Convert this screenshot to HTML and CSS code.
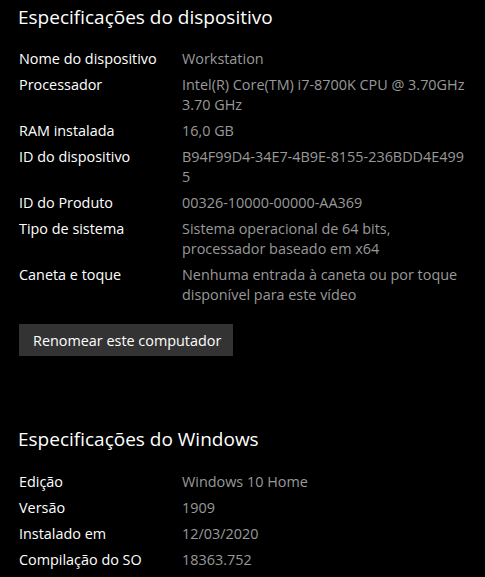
FILE: index.html
```html
<!DOCTYPE html>
<html lang="pt-BR">
<head>
<meta charset="utf-8">
<title>Sobre</title>
<link rel="stylesheet" href="styles.css">
</head>
<body>
<main class="page">
  <section class="section">
    <h2 class="title">Especificações do dispositivo</h2>
    <dl class="specs">
      <div class="row"><dt>Nome do dispositivo</dt><dd>Workstation</dd></div>
      <div class="row"><dt>Processador</dt><dd>Intel(R) Core(TM) i7-8700K CPU @ 3.70GHz<br>3.70 GHz</dd></div>
      <div class="row"><dt>RAM instalada</dt><dd>16,0 GB</dd></div>
      <div class="row"><dt>ID do dispositivo</dt><dd>B94F99D4-34E7-4B9E-8155-236BDD4E499<br>5</dd></div>
      <div class="row"><dt>ID do Produto</dt><dd>00326-10000-00000-AA369</dd></div>
      <div class="row"><dt>Tipo de sistema</dt><dd>Sistema operacional de 64 bits,<br>processador baseado em x64</dd></div>
      <div class="row"><dt>Caneta e toque</dt><dd>Nenhuma entrada à caneta ou por toque<br>disponível para este vídeo</dd></div>
    </dl>
    <button class="btn" type="button">Renomear este computador</button>
  </section>
  <section class="section second">
    <h2 class="title">Especificações do Windows</h2>
    <dl class="specs">
      <div class="row"><dt>Edição</dt><dd>Windows 10 Home</dd></div>
      <div class="row"><dt>Versão</dt><dd>1909</dd></div>
      <div class="row"><dt>Instalado em</dt><dd>12/03/2020</dd></div>
      <div class="row"><dt>Compilação do SO</dt><dd>18363.752</dd></div>
    </dl>
  </section>
</main>
</body>
</html>
```
FILE: styles.css
```css
html, body {
  margin: 0;
  padding: 0;
  background: #000;
}
body {
  font-family: "Open Sans", "Noto Sans", "Liberation Sans", sans-serif;
  color: #fff;
  -webkit-font-smoothing: antialiased;
}
.page {
  padding: 3px 0 0 19px;
}
.section {
  display: flex;
  flex-direction: column;
  align-items: flex-start;
}
.second {
  margin-top: 69px;
}
.title {
  margin: 0 0 0 -1px;
  font-size: 19px;
  line-height: 28px;
  font-weight: 400;
}
.specs {
  margin: 18px 0 0 0;
  display: flex;
  flex-direction: column;
  gap: 6px;
  font-size: 14.4px;
  line-height: 20px;
}
.second .specs {
  margin-top: 19px;
}
.row {
  display: grid;
  grid-template-columns: 163px auto;
}
.row dt {
  margin: 0;
  color: #fff;
}
.row dd {
  margin: 0;
  color: #999;
  white-space: nowrap;
}
.btn {
  margin-top: 19px;
  height: 32px;
  padding: 0 12px 0 14px;
  border: none;
  background: #333;
  color: #fff;
  font: inherit;
  font-size: 14.4px;
}
```
